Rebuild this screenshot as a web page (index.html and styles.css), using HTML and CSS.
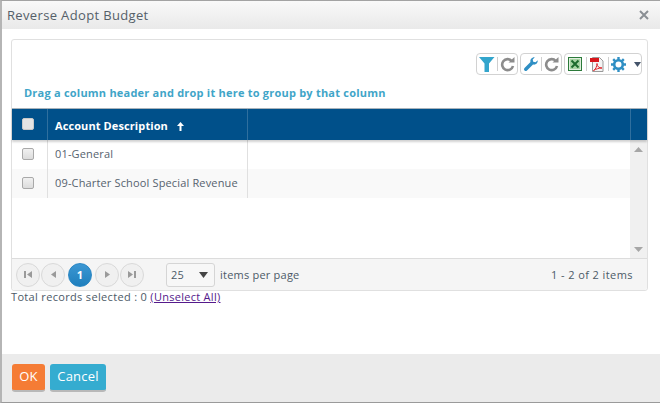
FILE: index.html
```html
<!DOCTYPE html>
<html lang="en">
<head>
<meta charset="utf-8">
<title>Reverse Adopt Budget</title>
<link rel="stylesheet" href="styles.css">
</head>
<body>
<div class="dialog">
  <header class="titlebar">
    <span class="title">Reverse Adopt Budget</span>
    <svg class="close" width="10" height="10" viewBox="0 0 10 10"><path d="M1 1l8 8M9 1l-8 8" stroke="#8a8f94" stroke-width="2" fill="none"/></svg>
  </header>
  <main class="content">
    <section class="grid">
      <div class="toolbar">
        <div class="tools">
          <svg class="ic" width="16" height="15" viewBox="0 0 16 15"><path d="M0 0h15.500L10 6.500V15H5.500V6.500z" fill="#33a5cc"/></svg>
          <i class="sep"></i>
          <svg class="ic" width="15" height="15" viewBox="0 0 15 15"><path d="M11.800 4A5.500 5.500 0 1 0 13 9" stroke="#8c8c8c" stroke-width="2.600" fill="none"/><path d="M8.500 5.500h6V0z" fill="#8c8c8c"/></svg>
        </div>
        <div class="tools">
          <svg class="ic" width="16" height="16" viewBox="0 0 16 16"><path d="M1.500 14.500a1.800 1.800 0 0 0 2.500 0L10 8.500c2.500.7 5-1.300 4.800-4.300L12.500 6.300 10.200 5.800 9.700 3.500 11.800 1.200C8.800 1 6.800 3.500 7.500 6L1.500 12a1.800 1.800 0 0 0 0 2.500z" fill="#2f8fc4"/></svg>
          <i class="sep"></i>
          <svg class="ic" width="15" height="15" viewBox="0 0 15 15"><path d="M11.800 4A5.500 5.500 0 1 0 13 9" stroke="#8c8c8c" stroke-width="2.600" fill="none"/><path d="M8.500 5.500h6V0z" fill="#8c8c8c"/></svg>
        </div>
        <div class="tools tools-wide">
          <svg class="ic" width="14" height="14" viewBox="0 0 14 14"><rect x=".5" y=".5" width="13" height="13" fill="#dfeedd" stroke="#2c7a3a"/><rect x="2" y="2" width="10" height="10" fill="#a9d4a4"/><path d="M3.500 3.500l7 7M10.500 3.500l-7 7" stroke="#1d6b2d" stroke-width="2"/></svg>
          <i class="sep"></i>
          <svg class="ic" width="14" height="15" viewBox="0 0 14 15"><path d="M2.500.500h7l3.500 3.500v10.500H2.500z" fill="#f4f4f4" stroke="#9a9a9a"/><rect x="0" y="1" width="9" height="4" fill="#d8161b"/><path d="M3.500 13.500c2-1 3.500-4 3.500-7 0 3 2 4.500 5 4.500-3 0-6 1-8.500 2.500z" fill="none" stroke="#e0262b"/></svg>
          <i class="sep"></i>
          <svg class="ic gear" width="15" height="15" viewBox="0 0 15 15"><circle cx="7.500" cy="7.500" r="4.300" fill="none" stroke="#2f8fc4" stroke-width="2.600"/><path d="M7.500 0v3M7.500 12v3M0 7.500h3M12 7.500h3M2.200 2.200l2.100 2.100M10.700 10.700l2.100 2.100M12.800 2.200l-2.100 2.100M4.300 10.700l-2.100 2.100" stroke="#2f8fc4" stroke-width="2.400"/></svg>
          <svg class="caret" width="7" height="5" viewBox="0 0 7 5"><path d="M0 0h7L3.500 5z" fill="#44546a"/></svg>
        </div>
      </div>
      <div class="group-hint">Drag a column header and drop it here to group by that column</div>
      <div class="head row-grid">
        <div class="cell check-cell"><span class="checkbox head-box"></span></div>
        <div class="cell head-label">Account Description <svg class="sort" width="7" height="9" viewBox="0 0 7 9"><path d="M3.500 0L7 4H4.500v5h-2V4H0z" fill="#fff"/></svg></div>
        <div class="cell"></div>
        <div class="cell"></div>
      </div>
      <div class="body">
        <div class="rows">
          <div class="row row-grid-body">
            <div class="cell check-cell"><span class="checkbox"></span></div>
            <div class="cell text-cell">01-General</div>
            <div class="cell last"></div>
          </div>
          <div class="row row-alt row-grid-body">
            <div class="cell check-cell"><span class="checkbox"></span></div>
            <div class="cell text-cell">09-Charter School Special Revenue</div>
            <div class="cell last"></div>
          </div>
        </div>
        <div class="scrollbar">
          <svg width="9" height="5" viewBox="0 0 9 5"><path d="M4.500 0L9 5H0z" fill="#a6a6a6"/></svg>
          <svg width="9" height="5" viewBox="0 0 9 5"><path d="M0 0h9L4.500 5z" fill="#a6a6a6"/></svg>
        </div>
      </div>
      <footer class="pager">
        <div class="pages">
          <span class="pg"><svg width="8" height="7" viewBox="0 0 8 7"><path d="M0 0h2v7H0zM8 0v7L3 3.500z" fill="#9a9a9a"/></svg></span>
          <span class="pg"><svg width="5" height="7" viewBox="0 0 5 7"><path d="M5 0v7L0 3.500z" fill="#9a9a9a"/></svg></span>
          <span class="pg pg-on">1</span>
          <span class="pg"><svg width="5" height="7" viewBox="0 0 5 7"><path d="M0 0v7l5-3.500z" fill="#9a9a9a"/></svg></span>
          <span class="pg"><svg width="8" height="7" viewBox="0 0 8 7"><path d="M6 0h2v7H6zM0 0v7l5-3.500z" fill="#9a9a9a"/></svg></span>
        </div>
        <div class="size"><span>25</span><svg width="9" height="6" viewBox="0 0 9 6"><path d="M0 0h9L4.500 6z" fill="#444"/></svg></div>
        <span class="per">items per page</span>
        <span class="info">1 - 2 of 2 items</span>
      </footer>
    </section>
    <p class="total">Total records selected : 0 <a href="#" class="unselect">(Unselect All)</a></p>
  </main>
  <footer class="actions">
    <button class="btn btn-ok">OK</button>
    <button class="btn btn-cancel">Cancel</button>
  </footer>
</div>
</body>
</html>
```
FILE: styles.css
```css
* { box-sizing: border-box; }
html, body { margin: 0; height: 100%; }
body { font-family: "Open Sans", sans-serif; font-size: 11px; color: #4c5a67; background: #fff; }
.dialog { width: 660px; height: 403px; display: flex; flex-direction: column; border-top: 1px solid #a3a3a3; border-left: 2px solid #b5b5b5; border-bottom: 1px solid #9a9a9a; overflow: hidden; }
.titlebar { height: 28px; flex: none; display: flex; align-items: center; justify-content: space-between; padding: 0 11px 0 5px; background: linear-gradient(#f9f9f9, #e9e9e9); }
.title { font-size: 13px; letter-spacing: .35px; color: #555f69; }
.close { display: block; }
.content { flex: 1; padding: 10px 12px 0 9px; }
.grid { width: 637px; height: 252px; background: #fff; border: 1px solid #e0e0e0; border-radius: 3px; display: flex; flex-direction: column; }
.toolbar { height: 36px; flex: none; display: flex; justify-content: flex-end; gap: 2px; padding: 13px 5px 0 0; }
.tools { width: 42px; height: 22px; display: flex; align-items: center; justify-content: space-between; padding: 0 2px; border: 1px solid #d2d2d2; border-radius: 4px; background: #fff; }
.tools-wide { width: 78px; padding: 0 3px; justify-content: flex-start; gap: 3.5px; }
.ic { display: block; flex: none; }
.gear { margin-left: -1.5px; }
.sep { width: 1px; height: 14px; background: #cfcfcf; flex: none; }
.caret { display: block; flex: none; margin-left: 4.5px; }
.group-hint { height: 32px; flex: none; padding: 9px 0 0 12px; font-size: 11px; font-weight: 700; letter-spacing: .22px; color: #3fa5c8; line-height: 16px; }
.head { height: 32px; flex: none; background: #00508a; border-top: 1px solid #a9b3bb; box-shadow: 0 2px 2px rgba(0,0,0,.18); position: relative; }
.row-grid { display: grid; grid-template-columns: 36px 200px 383px 1fr; }
.row-grid .cell { border-right: 1px solid #2f6f9e; display: flex; align-items: center; }
.row-grid .cell:last-child { border-right: 0; }
.check-cell { justify-content: center; padding-right: 3px; }
.head .check-cell { padding-bottom: 2px; }
.head-label { padding: 2px 0 0 7px; font-weight: 700; color: #fff; gap: 9px; letter-spacing: .1px; }
.sort { display: block; margin-top: 2px; }
.checkbox { width: 12px; height: 12px; display: block; border: 1px solid #a9a9a9; border-radius: 2px; background: linear-gradient(#f1f1f1, #dcdcdc); }
.head-box { background: #e4e4e4; border-color: #c9c9c9; }
.body { flex: 1; display: flex; min-height: 0; }
.rows { flex: 1; }
.row-grid-body { display: grid; grid-template-columns: 36px 200px 1fr; height: 29px; }
.row-alt { background: #f9f9f9; }
.row-grid-body .cell { display: flex; align-items: center; border-right: 1px solid #e0e0e0; padding-bottom: 2px; }
.row-grid-body .last { border-right: 0; }
.text-cell { padding-left: 7px; letter-spacing: .15px; color: #56626e; }
.scrollbar { width: 17px; flex: none; background: #f0f0f0; display: flex; flex-direction: column; align-items: center; justify-content: space-between; padding: 7px 0 6px; }
.pager { height: 32px; flex: none; display: flex; align-items: center; padding: 0 14px 0 4px; background: #f5f5f5; border-top: 1px solid #dcdcdc; border-radius: 0 0 3px 3px; }
.pages { display: flex; align-items: center; gap: 1px; }
.pg { width: 24px; height: 24px; display: flex; align-items: center; justify-content: center; border: 1px solid #d9d9d9; border-radius: 50%; background: #f0f0f0; }
.pg-on { background: linear-gradient(#3b97d3, #1f7fbd); border-color: #2a87c4; color: #fff; font-weight: 700; margin: 0 2px; }
.size { width: 49px; height: 24px; margin-left: 22px; display: flex; align-items: center; justify-content: space-between; padding: 0 6px 0 4px; background: #f7f7f7; border: 1px solid #d5d5d5; border-radius: 3px; letter-spacing: .2px; }
.per { margin-left: 5px; letter-spacing: .22px; }
.info { margin-left: auto; letter-spacing: .42px; }
.total { margin: 0; height: 16px; line-height: 11px; letter-spacing: .33px; }
.unselect { color: #551a8b; letter-spacing: .28px; }
.actions { flex: none; height: 48px; margin-left: -2px; background: #ebebeb; display: flex; align-items: flex-start; gap: 5px; padding: 10px 0 0 12px; }
.btn { height: 28px; border: 0; border-radius: 3px; padding: 0 0 2px; font-family: "Open Sans", sans-serif; font-size: 13px; letter-spacing: .2px; color: #fff; border-bottom: 2px solid #b8b8b8; }
.btn-ok { width: 33px; background: #f57c35; }
.btn-cancel { width: 56px; background: #35acd0; }
```
